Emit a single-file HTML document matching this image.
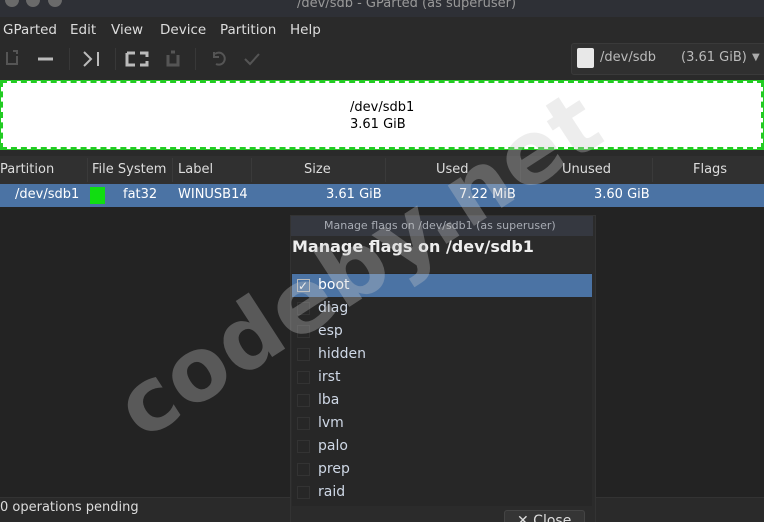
<!DOCTYPE html><html><head><style>
html,body{margin:0;width:764px;height:522px;overflow:hidden}
body{background:#262626;font-family:"DejaVu Sans","Liberation Sans",sans-serif;font-size:13px;color:#ddd;position:relative}
.a{position:absolute;white-space:nowrap}
.cb{display:inline-block;width:11px;height:11px;border:1px solid #333;vertical-align:middle;margin-right:8px}
.sep{position:absolute;top:158px;width:1px;height:24px;background:#3a3a3a}
</style></head><body>
<div class="a" style="left:0;top:0;width:764px;height:17px;background:#2e3036"></div>
<div class="a" style="left:5px;top:-7px;width:14px;height:14px;border-radius:7px;background:#6a6a6a"></div>
<div class="a" style="left:26px;top:-7px;width:14px;height:14px;border-radius:7px;background:#6a6a6a"></div>
<div class="a" style="left:48px;top:-7px;width:14px;height:14px;border-radius:7px;background:#6a6a6a"></div>
<div class="a" style="left:297px;top:-4px;color:#999;font-size:13px">/dev/sdb - GParted (as superuser)</div>
<div class="a" style="left:0;top:17px;width:764px;height:480px;background:#2a2a2a"></div>
<div class="a" style="left:3px;top:22px;font-size:13.5px">GParted</div>
<div class="a" style="left:70px;top:22px;font-size:13.5px">Edit</div>
<div class="a" style="left:111px;top:22px;font-size:13.5px">View</div>
<div class="a" style="left:160px;top:22px;font-size:13.5px">Device</div>
<div class="a" style="left:220px;top:22px;font-size:13.5px">Partition</div>
<div class="a" style="left:290px;top:22px;font-size:13.5px">Help</div>
<svg class="a" style="left:0;top:44px" width="280" height="30" fill="none" stroke-width="2">
<path d="M7 8v12h10v-8M13 7h4v3" stroke="#555"/>
<path d="M38 15h15" stroke="#bbb" stroke-width="3"/>
<path d="M84 8l7 7-7 7M98 8v14" stroke="#bbb"/>
<path d="M127 9h8M127 9v12h8M140 9h7v4M140 21h7v-4" stroke="#bbb" stroke-width="3"/>
<path d="M168 11v10h10v-10M171 8h4" stroke="#555" stroke-width="3"/>
<path d="M215 10a6 6 0 1 1 1 10M214 8v5h5" stroke="#555"/>
<path d="M245 15l5 5 9-10" stroke="#555"/>
</svg>
<div class="a" style="left:69px;top:48px;width:1px;height:22px;background:#383838"></div>
<div class="a" style="left:115px;top:48px;width:1px;height:22px;background:#383838"></div>
<div class="a" style="left:195px;top:48px;width:1px;height:22px;background:#383838"></div>
<div class="a" style="left:571px;top:43px;width:195px;height:30px;background:#303030;border:1px solid #3a3a3a;border-radius:3px"></div>
<div class="a" style="left:577px;top:48px;width:17px;height:20px;background:#e8e8e8;border-radius:2px"></div>
<div class="a" style="left:600px;top:50px;color:#bbb">/dev/sdb</div>
<div class="a" style="left:681px;top:50px;color:#bbb">(3.61 GiB)</div>
<div class="a" style="left:752px;top:52px;color:#aaa;font-size:10px">▼</div>
<div class="a" style="left:0;top:80px;width:764px;height:70px;background:#fff"></div>
<div class="a" style="left:1px;top:81px;width:758px;height:64px;border:2px dashed #22cc22"></div>
<div class="a" style="left:0;top:80px;width:764px;height:70px;border:1px solid #22cc22;box-sizing:border-box"></div>
<div class="a" style="left:350px;top:99px;color:#000;font-size:13px;line-height:17px">/dev/sdb1<br>3.61 GiB</div>
<div class="a" style="left:0;top:156px;width:764px;height:28px;background:#303030"></div>
<div class="sep" style="left:87px"></div><div class="sep" style="left:172px"></div><div class="sep" style="left:251px"></div><div class="sep" style="left:385px"></div><div class="sep" style="left:520px"></div><div class="sep" style="left:652px"></div>
<div class="a" style="left:0;top:162px">Partition</div>
<div class="a" style="left:92px;top:162px">File System</div>
<div class="a" style="left:178px;top:162px">Label</div>
<div class="a" style="left:304px;top:162px">Size</div>
<div class="a" style="left:436px;top:162px">Used</div>
<div class="a" style="left:562px;top:162px">Unused</div>
<div class="a" style="left:693px;top:162px">Flags</div>
<div class="a" style="left:0;top:184px;width:764px;height:23px;background:#4b73a4"></div>
<div class="a" style="left:15px;top:187px;color:#fff">/dev/sdb1</div>
<div class="a" style="left:90px;top:187px;width:15px;height:17px;background:#11dd11"></div>
<div class="a" style="left:123px;top:187px;color:#fff">fat32</div>
<div class="a" style="left:178px;top:187px;color:#fff">WINUSB14</div>
<div class="a" style="left:326px;top:187px;color:#fff">3.61 GiB</div>
<div class="a" style="left:459px;top:187px;color:#fff">7.22 MiB</div>
<div class="a" style="left:594px;top:187px;color:#fff">3.60 GiB</div>
<div class="a" style="left:0;top:207px;width:764px;height:290px;background:#232323"></div>
<div class="a" style="left:0;top:497px;width:764px;height:25px;background:#2a2a2a;border-top:1px solid #333"></div>
<div class="a" style="left:0;top:500px">0 operations pending</div>
<div class="a" style="left:290px;top:215px;width:304px;height:307px;background:#2b2b2b;border:1px solid #333"></div>
<div class="a" style="left:291px;top:216px;width:302px;height:20px;background:#353840"></div>
<div class="a" style="left:324px;top:219px;color:#a8acb4;font-size:11px">Manage flags on /dev/sdb1 (as superuser)</div>
<div class="a" style="left:292px;top:237px;font-weight:bold;font-size:16px;color:#eee">Manage flags on /dev/sdb1</div>
<div class="a" style="left:292px;top:273px;width:300px;height:233px;background:#272727"></div>
<div class="a" style="left:292px;top:274px;width:300px;height:23px;background:#4b73a4"></div>
<div style="position:absolute;left:297px;top:274px;line-height:23px;color:#cfd8e6;font-size:14px">
<div><span class="cb" style="border-color:#bbb;position:relative"><span style="position:absolute;left:0;top:-5px;color:#fff;font-size:12px">✓</span></span><span style="color:#fff">boot</span></div>
<div><span class="cb"></span>diag</div>
<div><span class="cb"></span>esp</div>
<div><span class="cb"></span>hidden</div>
<div><span class="cb"></span>irst</div>
<div><span class="cb"></span>lba</div>
<div><span class="cb"></span>lvm</div>
<div><span class="cb"></span>palo</div>
<div><span class="cb"></span>prep</div>
<div><span class="cb"></span>raid</div>
</div>
<div class="a" style="left:504px;top:510px;width:81px;height:20px;background:#353535;border:1px solid #444;border-radius:3px;color:#ddd;padding:2px 0 0 12px;box-sizing:border-box;font-size:14px">✕ Close</div>
<div class="a" style="left:150px;top:365px;font-size:88px;font-weight:bold;color:rgba(200,200,200,0.33);transform:rotate(-33deg);transform-origin:left bottom;letter-spacing:1px;line-height:1">codeby.net</div>
</body></html>
